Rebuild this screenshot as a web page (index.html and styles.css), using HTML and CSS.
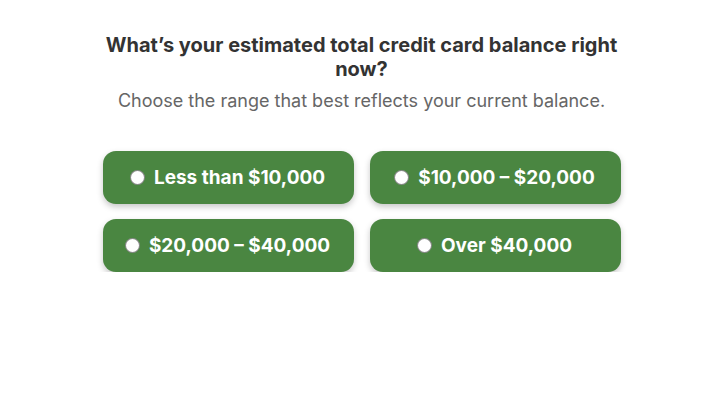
FILE: index.html
```html
<!DOCTYPE html>
<html lang="en">
<head>
    <meta charset="UTF-8">
    <meta name="viewport" content="width=device-width, initial-scale=1.0">
    <title>Credit card balance</title>
    <link rel="stylesheet" href="styles.css">
</head>
<body>
    <div class="quiz">
        <h1 class="question">What’s your estimated total credit card balance right now?</h1>
        <p class="hint">Choose the range that best reflects your current balance.</p>
        <div class="options">
            <button class="option" type="button"><span class="dot"></span>Less than $10,000</button>
            <button class="option" type="button"><span class="dot"></span>$10,000 – $20,000</button>
            <button class="option" type="button"><span class="dot"></span>$20,000 – $40,000</button>
            <button class="option" type="button"><span class="dot"></span>Over $40,000</button>
        </div>
    </div>
</body>
</html>
```

FILE: styles.css
```css
body {
    margin: 0;
    padding: 0;
    background: #fff;
    font-family: "Inter", "Liberation Sans", sans-serif;
}
.quiz {
    width: 518px;
    margin: 0 auto;
    padding-top: 33px;
    text-align: center;
    transform: translateX(1px);
}
.question {
    margin: 0;
    font-size: 20px;
    line-height: 24px;
    font-weight: 700;
    color: #333;
}
.hint {
    margin: 8px 0 0;
    font-size: 18px;
    line-height: 24px;
    color: #666;
}
.options {
    display: grid;
    grid-template-columns: 1fr 1fr;
    gap: 15px 16px;
    margin-top: 38px;
}
.option {
    display: flex;
    align-items: center;
    justify-content: center;
    gap: 10px;
    height: 53px;
    border: none;
    border-radius: 13px;
    background-color: #4a8641;
    color: #fff;
    font-family: "Inter", "Liberation Sans", sans-serif;
    font-size: 19px;
    font-weight: 700;
    box-shadow: 0 3px 6px rgba(0,0,0,0.22);
    cursor: pointer;
}
.dot {
    width: 13px;
    height: 13px;
    border-radius: 50%;
    background: #fff;
    box-shadow: 0 0 0 1px #8a8a8a;
}
```
